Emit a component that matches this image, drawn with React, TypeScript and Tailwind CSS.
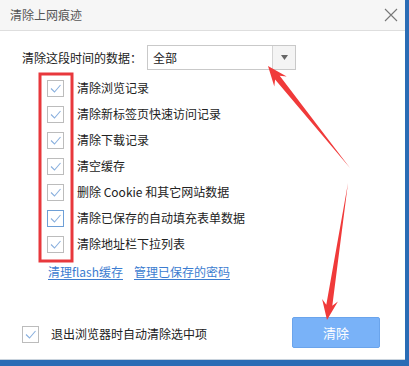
import React from "react";

const items = [
  "清除浏览记录",
  "清除新标签页快速访问记录",
  "清除下载记录",
  "清空缓存",
  "删除 Cookie 和其它网站数据",
  "清除已保存的自动填充表单数据",
  "清除地址栏下拉列表",
];

const Check = ({ hover = false }: { hover?: boolean }) => (
  <span
    className={`w-[17px] h-[17px] border bg-white flex items-center justify-center ${
      hover ? "border-[#6e9fd6]" : "border-[#bcbcbc]"
    }`}
  >
    <svg width="15" height="15" viewBox="0 0 15 15">
      <path d="M3 7.5 L6.5 11 L12.5 4" fill="none" stroke="#8ab0de" strokeWidth="1.1" />
    </svg>
  </span>
);

const App = () => {
  return (
    <div className="w-[409px] h-[366px] relative overflow-hidden bg-[#2a6cb5] font-['Noto_Sans_CJK_SC',sans-serif] text-[12px] text-[#222]">
      <div className="w-[405px] h-[360px] bg-white flex flex-col border-b border-[#c9d3dd]">
        {/* title bar */}
        <div className="h-[31px] bg-[#f6f6f6] border-b border-[#dedede] flex items-center justify-between pl-[10px] pr-[7px]">
          <span className="text-[12px] text-[#555]">清除上网痕迹</span>
          <svg width="14" height="14" viewBox="0 0 14 14">
            <path d="M1 1 L13 13 M13 1 L1 13" stroke="#777" strokeWidth="1.1" />
          </svg>
        </div>

        {/* time range */}
        <div className="mt-[14px] flex items-center pl-[22px] h-[25px]">
          <span className="w-[125px]">清除这段时间的数据：</span>
          <div className="w-[149px] h-[25px] border border-[#c9c9c9] flex">
            <span className="flex-1 pl-[5px] flex items-center">全部</span>
            <span className="w-[23px] border-l border-[#d4d4d4] bg-[#f4f4f4] flex items-center justify-center">
              <svg width="7" height="5" viewBox="0 0 7 5">
                <path d="M0 0 L7 0 L3.5 5 Z" fill="#666" />
              </svg>
            </span>
          </div>
        </div>

        {/* options */}
        <div className="mt-[5px] flex flex-col pl-[47px]">
          {items.map((t, i) => (
            <div key={t} className="h-[26px] flex items-center gap-[13px]">
              <Check hover={i === 5} />
              <span>{t}</span>
            </div>
          ))}
        </div>

        <div className="mt-[5px] h-[20px] flex items-center gap-[11px] pl-[48px] text-[#3b7cd0]">
          <span className="underline underline-offset-2">清理flash缓存</span>
          <span className="underline underline-offset-2">管理已保存的密码</span>
        </div>

        {/* footer */}
        <div className="mt-[35px] flex items-center justify-between pl-[22px] pr-[25px]">
          <div className="flex items-center gap-[12px] pt-[3px]">
            <Check />
            <span>退出浏览器时自动清除选中项</span>
          </div>
          <button className="w-[88px] h-[31px] rounded-[2px] bg-[#79b2f8] border border-[#6aa4ec] text-white text-[13px]">
            清除
          </button>
        </div>
      </div>

      {/* annotations */}
      <svg className="absolute inset-0 pointer-events-none" width="409" height="366" viewBox="0 0 409 366">
        <rect x="40" y="74" width="32" height="187" fill="none" stroke="#e8383c" strokeWidth="3" />
        <polygon
          points="350,168 279.7,75.8 286.7,76.6 268,66 274.3,86.6 275.1,79.6"
          fill="#f03a3a"
        />
        <polygon
          points="348,183 332.3,305.7 337.9,301.4 327,320 322.1,299 326.3,304.7"
          fill="#f03a3a"
        />
      </svg>
    </div>
  );
};

export default App;
